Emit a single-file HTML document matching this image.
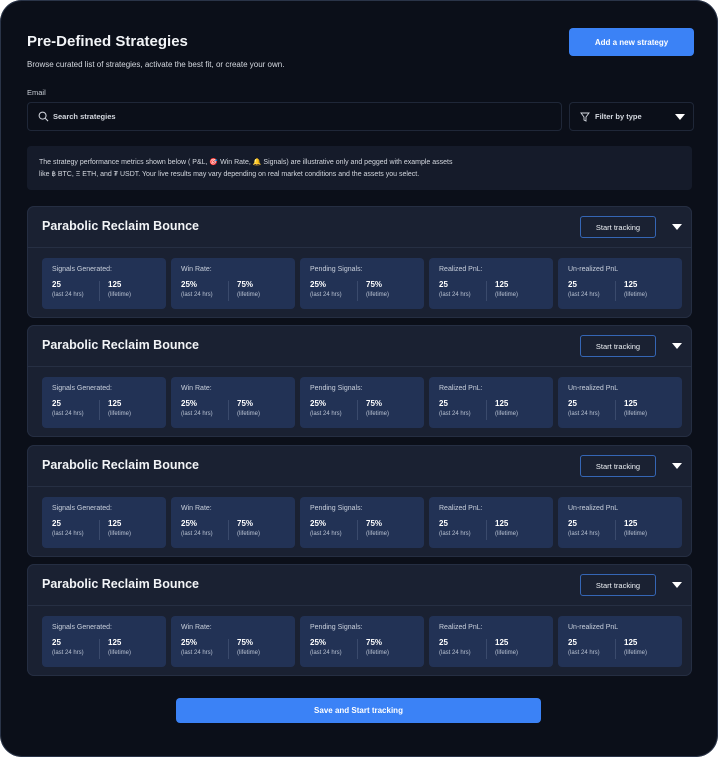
<!DOCTYPE html>
<html><head><meta charset="utf-8"><style>
*{box-sizing:border-box;margin:0;padding:0}
body{width:718px;height:757px;background:#fff;font-family:"Liberation Sans",sans-serif;overflow:hidden}
.wrap{position:absolute;left:0;top:0;width:718px;height:757px;background:#0b0f19;box-shadow:inset 0 0 0 1px #2a3448;border-radius:22px;color:#e6e9ef}
.abs{position:absolute}
h1{position:absolute;left:27px;top:33px;font-size:15px;font-weight:bold;color:#f2f4f7}
.sub{left:27px;top:60px;font-size:8px;color:#d5d9e0}
.lbl{left:27px;top:88px;font-size:7.5px;color:#c9ced6}
.btn{background:#3b82f6;border-radius:4px;color:#fff;font-weight:bold;font-size:8px;display:flex;align-items:center;justify-content:center}
.input{border:1px solid #1f2738;border-radius:4px;background:#0b0f19;font-size:7.5px;color:#d5d9e0;display:flex;align-items:center}
.info{left:27px;top:146px;width:665px;height:44px;background:#151b2a;border-radius:4px;font-size:7px;color:#d5d9e0;padding:11px 12px;line-height:11.5px}
.card{position:absolute;left:27px;width:665px;height:112px;background:#1a2132;box-shadow:inset 0 0 0 1px #252e42;border-radius:7px}
.card .t{position:absolute;left:15px;top:13px;font-size:12.5px;font-weight:bold;color:#f2f4f7}
.card .st{position:absolute;left:553px;top:10px;width:76px;height:22px;border:1px solid #3566b5;border-radius:3px;font-size:7.5px;color:#eef1f5;display:flex;align-items:center;justify-content:center}
.card .car{position:absolute;left:645px;top:18px;width:0;height:0;border-left:5px solid transparent;border-right:5px solid transparent;border-top:6px solid #fff}
.card .div{position:absolute;left:0;right:0;top:41px;height:1px;background:#262f43}
.m{position:absolute;top:52px;width:124px;height:51px;background:#223255;border-radius:4px}
.m .h{position:absolute;left:10px;top:8px;font-size:7px;color:#c9d0dc}
.m .a,.m .b{position:absolute;top:22px;font-size:8px;font-weight:bold;color:#fff}
.m .a{left:10px}.m .b{left:66px}
.m .a span,.m .b span{display:block;font-weight:normal;font-size:6px;color:#b9c2d2;margin-top:3px}
.m .sep{position:absolute;left:57px;top:23px;width:1px;height:20px;background:#3a4a6c}
</style></head><body><div class="wrap">
<h1>Pre-Defined Strategies</h1>
<div class="abs sub">Browse curated list of strategies, activate the best fit, or create your own.</div>
<div class="abs btn" style="left:569px;top:28px;width:125px;height:28px">Add a new strategy</div>
<div class="abs lbl">Email</div>
<div class="abs input" style="left:27px;top:102px;width:535px;height:29px;padding-left:10px;font-weight:bold">
<svg width="11" height="11" viewBox="0 0 12 12" style="margin-right:4px"><circle cx="5" cy="5" r="3.8" fill="none" stroke="#d5d9e0" stroke-width="1.1"/><path d="M8 8l3 3" stroke="#d5d9e0" stroke-width="1.1"/></svg>Search strategies</div>
<div class="abs input" style="left:569px;top:102px;width:125px;height:29px;padding-left:10px;font-weight:bold">
<svg width="10" height="10" viewBox="0 0 10 10" style="margin-right:5px"><path d="M1 1h8L6 5v4L4 8V5z" fill="none" stroke="#d5d9e0" stroke-width="0.9"/></svg>Filter by type
<div style="position:absolute;right:8px;top:11px;border-left:5px solid transparent;border-right:5px solid transparent;border-top:6px solid #fff"></div></div>
<div class="abs info">The strategy performance metrics shown below ( P&amp;L, 🎯 Win Rate, 🔔 Signals) are illustrative only and pegged with example assets<br>like ฿ BTC, Ξ ETH, and ₮ USDT. Your live results may vary depending on real market conditions and the assets you select.</div>

<div class="card" style="top:206px"><div class="t">Parabolic Reclaim Bounce</div><div class="st">Start tracking</div><div class="car"></div><div class="div"></div>
<div class="m" style="left:15px"><div class="h">Signals Generated:</div><div class="a">25<span>(last 24 hrs)</span></div><div class="sep"></div><div class="b">125<span>(lifetime)</span></div></div>
<div class="m" style="left:144px"><div class="h">Win Rate:</div><div class="a">25%<span>(last 24 hrs)</span></div><div class="sep"></div><div class="b">75%<span>(lifetime)</span></div></div>
<div class="m" style="left:273px"><div class="h">Pending Signals:</div><div class="a">25%<span>(last 24 hrs)</span></div><div class="sep"></div><div class="b">75%<span>(lifetime)</span></div></div>
<div class="m" style="left:402px"><div class="h">Realized PnL:</div><div class="a">25<span>(last 24 hrs)</span></div><div class="sep"></div><div class="b">125<span>(lifetime)</span></div></div>
<div class="m" style="left:531px"><div class="h">Un-realized PnL</div><div class="a">25<span>(last 24 hrs)</span></div><div class="sep"></div><div class="b">125<span>(lifetime)</span></div></div>
</div>
<div class="card" style="top:325px"><div class="t">Parabolic Reclaim Bounce</div><div class="st">Start tracking</div><div class="car"></div><div class="div"></div>
<div class="m" style="left:15px"><div class="h">Signals Generated:</div><div class="a">25<span>(last 24 hrs)</span></div><div class="sep"></div><div class="b">125<span>(lifetime)</span></div></div>
<div class="m" style="left:144px"><div class="h">Win Rate:</div><div class="a">25%<span>(last 24 hrs)</span></div><div class="sep"></div><div class="b">75%<span>(lifetime)</span></div></div>
<div class="m" style="left:273px"><div class="h">Pending Signals:</div><div class="a">25%<span>(last 24 hrs)</span></div><div class="sep"></div><div class="b">75%<span>(lifetime)</span></div></div>
<div class="m" style="left:402px"><div class="h">Realized PnL:</div><div class="a">25<span>(last 24 hrs)</span></div><div class="sep"></div><div class="b">125<span>(lifetime)</span></div></div>
<div class="m" style="left:531px"><div class="h">Un-realized PnL</div><div class="a">25<span>(last 24 hrs)</span></div><div class="sep"></div><div class="b">125<span>(lifetime)</span></div></div>
</div>
<div class="card" style="top:445px"><div class="t">Parabolic Reclaim Bounce</div><div class="st">Start tracking</div><div class="car"></div><div class="div"></div>
<div class="m" style="left:15px"><div class="h">Signals Generated:</div><div class="a">25<span>(last 24 hrs)</span></div><div class="sep"></div><div class="b">125<span>(lifetime)</span></div></div>
<div class="m" style="left:144px"><div class="h">Win Rate:</div><div class="a">25%<span>(last 24 hrs)</span></div><div class="sep"></div><div class="b">75%<span>(lifetime)</span></div></div>
<div class="m" style="left:273px"><div class="h">Pending Signals:</div><div class="a">25%<span>(last 24 hrs)</span></div><div class="sep"></div><div class="b">75%<span>(lifetime)</span></div></div>
<div class="m" style="left:402px"><div class="h">Realized PnL:</div><div class="a">25<span>(last 24 hrs)</span></div><div class="sep"></div><div class="b">125<span>(lifetime)</span></div></div>
<div class="m" style="left:531px"><div class="h">Un-realized PnL</div><div class="a">25<span>(last 24 hrs)</span></div><div class="sep"></div><div class="b">125<span>(lifetime)</span></div></div>
</div>
<div class="card" style="top:564px"><div class="t">Parabolic Reclaim Bounce</div><div class="st">Start tracking</div><div class="car"></div><div class="div"></div>
<div class="m" style="left:15px"><div class="h">Signals Generated:</div><div class="a">25<span>(last 24 hrs)</span></div><div class="sep"></div><div class="b">125<span>(lifetime)</span></div></div>
<div class="m" style="left:144px"><div class="h">Win Rate:</div><div class="a">25%<span>(last 24 hrs)</span></div><div class="sep"></div><div class="b">75%<span>(lifetime)</span></div></div>
<div class="m" style="left:273px"><div class="h">Pending Signals:</div><div class="a">25%<span>(last 24 hrs)</span></div><div class="sep"></div><div class="b">75%<span>(lifetime)</span></div></div>
<div class="m" style="left:402px"><div class="h">Realized PnL:</div><div class="a">25<span>(last 24 hrs)</span></div><div class="sep"></div><div class="b">125<span>(lifetime)</span></div></div>
<div class="m" style="left:531px"><div class="h">Un-realized PnL</div><div class="a">25<span>(last 24 hrs)</span></div><div class="sep"></div><div class="b">125<span>(lifetime)</span></div></div>
</div>
<div class="abs btn" style="left:176px;top:698px;width:365px;height:25px">Save and Start tracking</div>
</div></body></html>
